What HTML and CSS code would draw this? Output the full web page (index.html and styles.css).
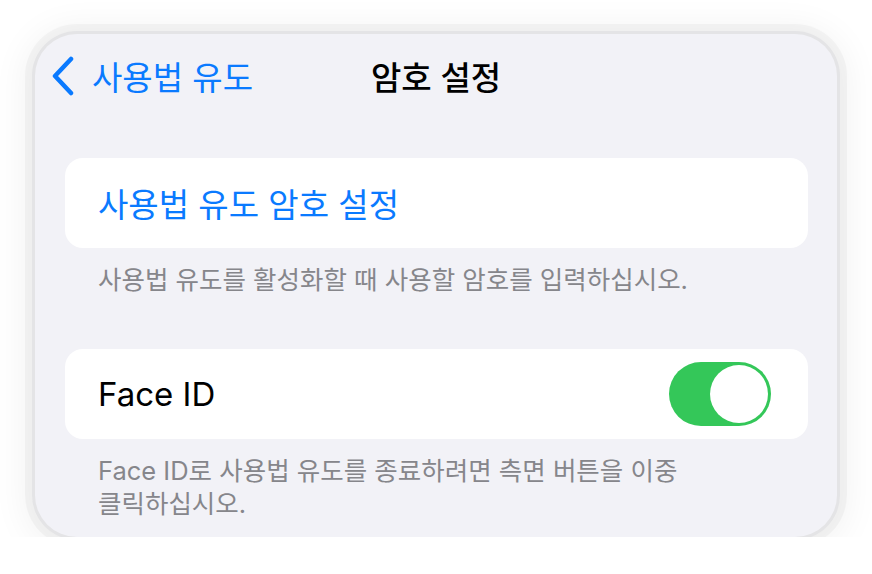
FILE: index.html
```
<!DOCTYPE html>
<html lang="ko">

<head>
    <meta charset="UTF-8">
    <meta name="viewport" content="width=device-width, initial-scale=1.0">
    <title>암호 설정</title>
    <link rel="stylesheet" href="styles.css">
</head>

<body>
    <div class="screen">
        <div class="nav-bar">
            <a class="back-link" href="#">
                <svg class="chevron" width="26" height="40" viewBox="0 0 26 40">
                    <path d="M21 3 L5 20 L21 37" fill="none" stroke="#0a7aff" stroke-width="4.5" stroke-linecap="round" stroke-linejoin="round" />
                </svg>
                <span>사용법 유도</span>
            </a>
            <h1 class="nav-title">암호 설정</h1>
            <div></div>
        </div>

        <div class="group">
            <div class="row">
                <span class="row-link">사용법 유도 암호 설정</span>
            </div>
        </div>
        <p class="group-footer">사용법 유도를 활성화할 때 사용할 암호를 입력하십시오.</p>

        <div class="group">
            <div class="row">
                <span class="row-label">Face ID</span>
                <label class="switch">
                    <input type="checkbox" checked>
                    <span class="knob"></span>
                </label>
            </div>
        </div>
        <p class="group-footer">Face ID로 사용법 유도를 종료하려면 측면 버튼을 이중<br>클릭하십시오.</p>
    </div>
</body>

</html>
```

FILE: styles.css
```
* {
    margin: 0;
    padding: 0;
    box-sizing: border-box;
}

body {
    background-color: #ffffff;
    font-family: 'Inter', 'Noto Sans CJK KR', sans-serif;
}

.screen {
    width: 802px;
    height: 503px;
    margin: 34px 0 0 35px;
    background-color: #f2f2f7;
    border-radius: 42px;
    box-shadow: 0 0 0 3px #e4e4e6, 0 0 0 10px rgba(0, 0, 0, 0.03), 0 4px 34px 12px rgba(0, 0, 0, 0.05);
    overflow: hidden;
}

.nav-bar {
    display: grid;
    grid-template-columns: 1fr auto 1fr;
    align-items: center;
    height: 84px;
    padding: 0 15px;
}

.back-link {
    display: flex;
    align-items: center;
    gap: 16px;
    color: #0a7aff;
    text-decoration: none;
    font-size: 33px;
}

.chevron {
    display: block;
}

.nav-title {
    font-size: 33px;
    font-weight: 500;
    color: #000;
}

.group {
    margin: 40px 29px 0 30px;
    background: #ffffff;
    border-radius: 18px;
}

.row {
    height: 90px;
    display: flex;
    align-items: center;
    justify-content: space-between;
    padding: 0 37px 0 33px;
}

.row-link {
    color: #0a7aff;
    font-size: 33px;
}

.row-label {
    color: #000;
    font-size: 33px;
}

.group-footer {
    margin: 15px 60px 0 63px;
    color: #86868b;
    font-size: 25.5px;
    line-height: 33px;
}

.group-footer + .group {
    margin-top: 53px;
}

.switch {
    position: relative;
    display: block;
    width: 102px;
    height: 64px;
}

.switch input {
    display: none;
}

.knob {
    position: absolute;
    inset: 0;
    background: #34c759;
    border-radius: 32px;
}

.knob::after {
    content: "";
    position: absolute;
    top: 3px;
    right: 3px;
    width: 58px;
    height: 58px;
    border-radius: 50%;
    background: #ffffff;
}
```
